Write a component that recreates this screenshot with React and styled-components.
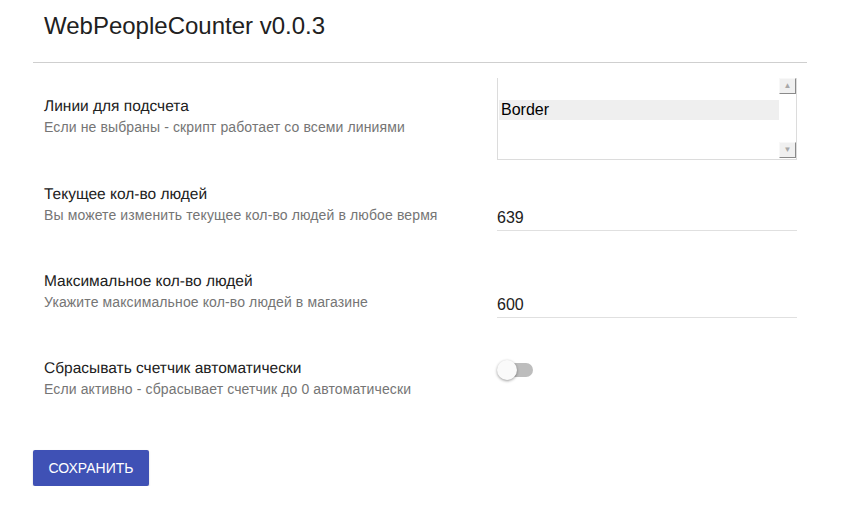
import React, {Component} from 'react'
import styled, {createGlobalStyle} from 'styled-components'

const colors = {
    text: '#212121',
    textSecondary: '#757575',
    divider: '#cfcfcf',
    line: '#e0e0e0',
    primary: '#3f51b5',
}

const GlobalStyle = createGlobalStyle`
    body {
        margin: 0;
        background: #ffffff;
        font-family: "Liberation Sans", Arial, sans-serif;
        color: ${colors.text};
    }
`

const fields = [
    {
        label: 'Текущее кол-во людей',
        hint: 'Вы можете изменить текущее кол-во людей в любое вермя',
        value: '639',
    },
    {
        label: 'Максимальное кол-во людей',
        hint: 'Укажите максимальное кол-во людей в магазине',
        value: '600',
    },
]

export default class App extends Component{
    render(){
        return(
            <Page>
                <GlobalStyle/>
                <Header>
                    <Title>WebPeopleCounter v0.0.3</Title>
                </Header>
                <Form>
                    <Row gap={25}>
                        <Info offset={19}>
                            <Label>Линии для подсчета</Label>
                            <Hint>Если не выбраны - скрипт работает со всеми линиями</Hint>
                        </Info>
                        <ListBox>
                            <Options>
                                <Option selected>Border</Option>
                            </Options>
                            <ScrollBar>
                                <ScrollButton>&#9650;</ScrollButton>
                                <ScrollButton>&#9660;</ScrollButton>
                            </ScrollBar>
                        </ListBox>
                    </Row>
                    {fields.map(f =>
                        <Row gap={41} key={f.label}>
                            <Info>
                                <Label>{f.label}</Label>
                                <Hint>{f.hint}</Hint>
                            </Info>
                            <Input defaultValue={f.value}/>
                        </Row>)}
                    <Row gap={51}>
                        <Info>
                            <Label>Сбрасывать счетчик автоматически</Label>
                            <Hint>Если активно - сбрасывает счетчик до 0 автоматически</Hint>
                        </Info>
                        <Toggle>
                            <Track/>
                            <Knob/>
                        </Toggle>
                    </Row>
                </Form>
                <Button>Сохранить</Button>
            </Page>
        )
    }
}

const Page = styled.div`
    padding: 0 41px 0 33px;
    width: 774px;
`

const Header = styled.div`
    padding: 12px 0 22px 11px;
    border-bottom: 1px solid ${colors.divider};
`

const Title = styled.div`
    font-size: 24px;
    line-height: 28px;
    color: ${colors.text};
`

const Form = styled.div`
    padding: 15px 0 0 11px;
`

const Row = styled.div`
    display: grid;
    grid-template-columns: 453px 300px;
    align-items: start;
    margin-bottom: ${p => p.gap}px;
`

const Info = styled.div`
    padding-top: ${p => p.offset || 0}px;
`

const Label = styled.div`
    font-size: 15.5px;
    line-height: 20px;
    text-rendering: geometricPrecision;
    color: ${colors.text};
`

const Hint = styled.div`
    font-size: 14px;
    line-height: 20px;
    letter-spacing: 0.12px;
    color: ${colors.textSecondary};
`

const ListBox = styled.div`
    display: flex;
    border: 1px solid #dcdcdc;
    border-top: none;
    box-sizing: border-box;
    width: 300px;
    height: 82px;
`

const Options = styled.div`
    flex: 1;
    padding: 22px 0 0 1px;
`

const Option = styled.div`
    height: 20px;
    line-height: 20px;
    padding-left: 2px;
    font-size: 16px;
    color: #000;
    background: ${p => p.selected ? '#efefef' : 'transparent'};
`

const ScrollBar = styled.div`
    width: 17px;
    display: flex;
    flex-direction: column;
    justify-content: space-between;
    padding-bottom: 1px;
`

const ScrollButton = styled.div`
    height: 16px;
    box-sizing: border-box;
    background: #f0f0f0;
    border-top: 1px solid #f8f8f8;
    border-left: 1px solid #f8f8f8;
    border-right: 1px solid #8a8a8a;
    border-bottom: 1px solid #8a8a8a;
    color: #a8a8a8;
    font-size: 8px;
    line-height: 14px;
    text-align: center;
`

const Input = styled.input`
    margin-top: 16px;
    height: 30px;
    box-sizing: border-box;
    width: 300px;
    border: none;
    border-bottom: 1px solid ${colors.line};
    padding: 4px 0 0 0;
    font-family: "Liberation Sans", Arial, sans-serif;
    font-size: 16px;
    color: ${colors.text};
    background: transparent;
    outline: none;
`

const Toggle = styled.div`
    position: relative;
    margin-top: 1px;
    width: 36px;
    height: 20px;
`

const Track = styled.div`
    position: absolute;
    left: 2px;
    top: 3px;
    width: 34px;
    height: 14px;
    border-radius: 7px;
    background: #bdbdbd;
`

const Knob = styled.div`
    position: absolute;
    left: 0;
    top: 0;
    width: 20px;
    height: 20px;
    border-radius: 50%;
    background: #fafafa;
    box-shadow: 0 1px 3px rgba(0, 0, 0, 0.4);
`

const Button = styled.button`
    display: block;
    width: 116px;
    height: 36px;
    background-color: ${colors.primary};
    color: #ffffff;
    border: none;
    border-radius: 2px;
    font-family: "Liberation Sans", Arial, sans-serif;
    font-size: 14px;
    text-transform: uppercase;
    padding: 0;
    box-shadow: 0 1px 2px rgba(0, 0, 0, 0.2);
    cursor: pointer;

    &:focus{
        outline: none;
    }
`
